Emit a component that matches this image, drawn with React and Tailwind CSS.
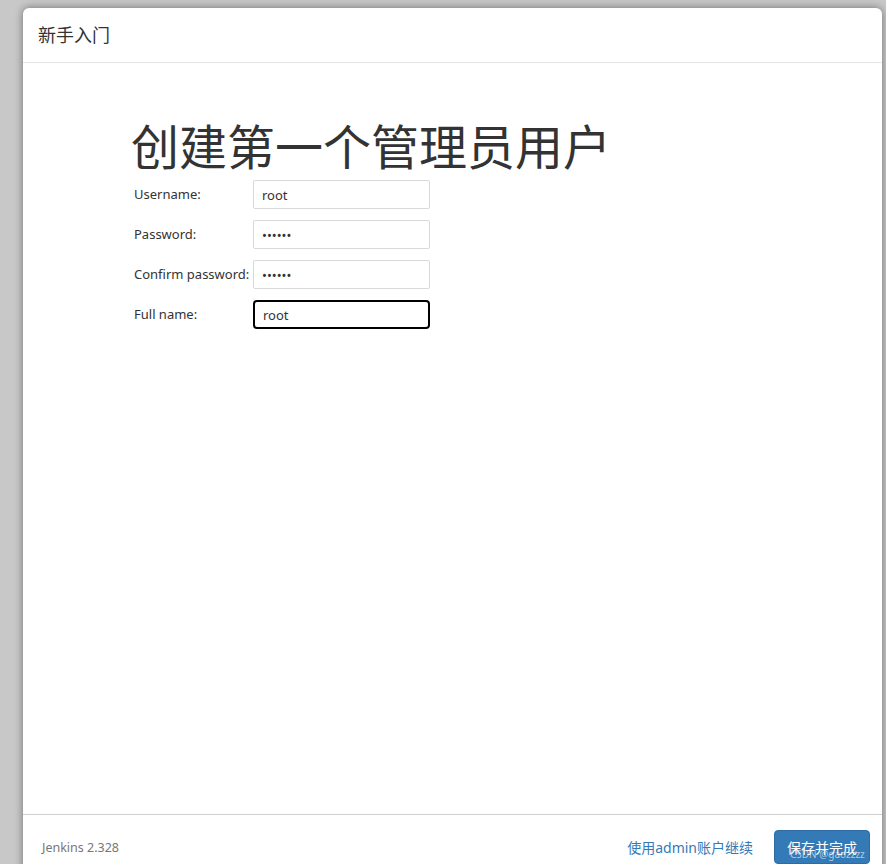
import React from "react";

const fontStack = '"Noto Sans", "Noto Sans CJK SC", sans-serif';

function FormRow({label, type, value, focused}) {
    return (
        <div className="flex items-start h-[40px]">
            <label className="w-[119px] pt-[5px] text-[13px] leading-[18px] text-[#333] whitespace-nowrap">
                {label}
            </label>
            <input
                type={type}
                value={value}
                readOnly
                className={'w-[177px] h-[29px] px-[8px] text-[13px] text-[#333] bg-white outline-none ' +
                    (focused ? 'border-2 border-black rounded-[4px] px-[7px]' : 'border border-[#d9d9d9] rounded-[2px]')}
                style={{fontFamily: fontStack}}
            />
        </div>
    );
}

export default function App() {
    return (
        <div className="h-[864px] w-[886px] overflow-hidden bg-[#c8c8c8] pt-[8px] pl-[23px] pr-[4px]"
             style={{fontFamily: fontStack}}>
            <div className="bg-white rounded-t-[6px] h-[900px] flex flex-col
                 shadow-[0_0_8px_rgba(0,0,0,0.45)]">
                <div className="h-[55px] shrink-0 border-b border-[#e5e5e5] px-[15px] flex items-center">
                    <h4 className="text-[18px] text-[#333] leading-none">新手入门</h4>
                </div>

                <div className="h-[751px] shrink-0 pl-[108px] pt-[57px]">
                    <h1 className="text-[48px] leading-[53px] text-[#333] mb-[7px]">
                        创建第一个管理员用户
                    </h1>
                    <div className="pl-[3px]">
                        <FormRow label="Username:" type="text" value="root"/>
                        <FormRow label="Password:" type="password" value="123456"/>
                        <FormRow label="Confirm password:" type="password" value="123456"/>
                        <FormRow label="Full name:" type="text" value="root" focused/>
                    </div>
                </div>

                <div className="border-t border-[#cfcfcf] pt-[15px] pl-[19px] pr-[12px] flex items-center">
                    <span className="text-[12.5px] text-[#777] mt-[3px]">Jenkins 2.328</span>
                    <div className="ml-auto flex items-center gap-[21px]">
                        <a className="text-[14px] text-[#337ab7] cursor-pointer">使用admin账户继续</a>
                        <div className="relative">
                            <button className="h-[34px] px-[12px] rounded-[4px] bg-[#337ab7] border border-[#2e6da4]
                                text-white text-[14px]">
                                保存并完成
                            </button>
                            <span className="absolute left-[16px] top-[19px] text-[10px] leading-none
                                text-white/60 whitespace-nowrap pointer-events-none">
                                CSDN @gaozzzz
                            </span>
                        </div>
                    </div>
                </div>
            </div>
        </div>
    );
}
